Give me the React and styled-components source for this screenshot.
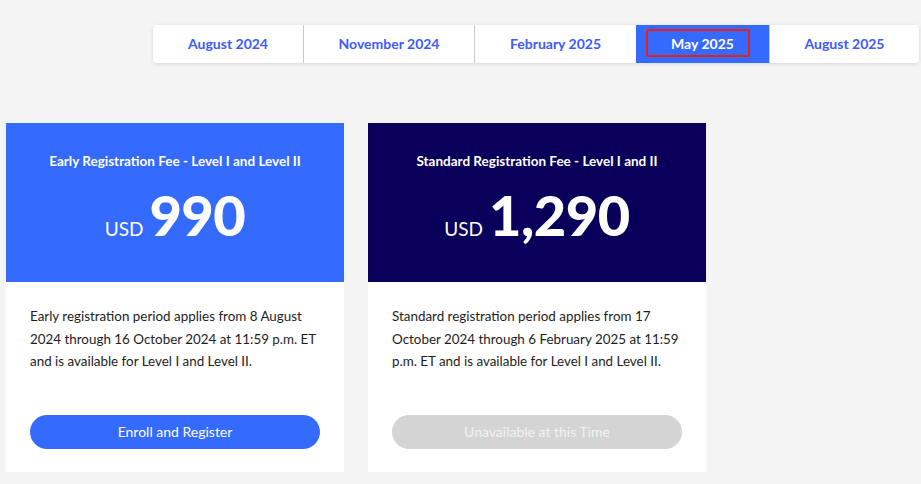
import React from "react";
import styled, { createGlobalStyle } from "styled-components";

const GlobalStyle = createGlobalStyle`
	body {
		margin: 0;
		background: #f4f4f4;
		font-family: Lato, "Open Sans", sans-serif;
	}
`;

const Page = styled.div`
	width: 921px;
	height: 484px;
	overflow: hidden;
	box-sizing: border-box;
	padding: 25px 2px 0 6px;
`;

const TabBar = styled.div`
	display: flex;
	justify-content: flex-end;
`;

const Tabs = styled.div`
	display: flex;
	height: 38px;
	background: #fff;
	border-radius: 4px;
	box-shadow: 0 1px 4px rgba(0, 0, 0, 0.12);
	overflow: hidden;
`;

const Tab = styled.button`
	width: ${(props) => props.width}px;
	border: 0;
	border-left: ${(props) => (props.first || props.active ? "0" : "1px solid #c8c8c8")};
	background: ${(props) => (props.active ? "#356aff" : "#fff")};
	color: ${(props) => (props.active ? "#fff" : "#3d5afe")};
	font-family: Lato, sans-serif;
	font-weight: 700;
	font-size: 14px;
	padding: 0 0 2px;
	display: flex;
	align-items: center;
	justify-content: center;
`;

const Focus = styled.span`
	display: inline-flex;
	align-items: center;
	justify-content: center;
	width: 90px;
	height: 24px;
	padding-left: 10px;
	margin-right: 10px;
	border: 2px solid #e8201c;
	border-radius: 2px;
`;

const Cards = styled.div`
	display: flex;
	gap: 24px;
	margin-top: 60px;
`;

const Card = styled.div`
	width: 338px;
	background: #fff;
	display: flex;
	flex-direction: column;
`;

const Header = styled.div`
	height: 159px;
	box-sizing: border-box;
	background: ${(props) => props.bg};
	color: #fff;
	padding-top: 30px;
	text-align: center;
`;

const Title = styled.div`
	font-size: 13.5px;
	font-weight: 700;
	line-height: 16px;
`;

const Price = styled.div`
	display: flex;
	justify-content: center;
	align-items: baseline;
	gap: 6px;
	margin-top: 18px;
	line-height: 1;
`;

const Currency = styled.span`
	font-size: 19px;
`;

const Amount = styled.span`
	font-size: 56px;
	font-weight: 900;
	letter-spacing: -0.5px;
`;

const Body = styled.div`
	height: 190px;
	box-sizing: border-box;
	padding: 23px 24px 23px;
	display: flex;
	flex-direction: column;
`;

const Text = styled.p`
	margin: 0;
	font-size: 13.4px;
	line-height: 22.5px;
	color: #1d1d1d;
`;

const Action = styled.button`
	margin-top: auto;
	height: 34px;
	border: 0;
	border-radius: 17px;
	padding: 0 0 1px;
	background: ${(props) => (props.disabled ? "#d4d4d4" : "#356aff")};
	color: ${(props) => (props.disabled ? "#f2f2f2" : "#fff")};
	font-family: Lato, sans-serif;
	font-size: 14px;
`;

const tabs = [
	{ label: "August 2024", width: 150 },
	{ label: "November 2024", width: 171 },
	{ label: "February 2025", width: 162 },
	{ label: "May 2025", width: 133, active: true },
	{ label: "August 2025", width: 150 },
];

const cards = [
	{
		bg: "#356aff",
		title: "Early Registration Fee - Level I and Level II",
		amount: "990",
		text: "Early registration period applies from 8 August 2024 through 16 October 2024 at 11:59 p.m. ET and is available for Level I and Level II.",
		button: "Enroll and Register",
	},
	{
		bg: "#08005a",
		title: "Standard Registration Fee - Level I and II",
		amount: "1,290",
		text: "Standard registration period applies from 17 October 2024 through 6 February 2025 at 11:59 p.m. ET and is available for Level I and Level II.",
		button: "Unavailable at this Time",
		disabled: true,
	},
];

export default function App() {
	return (
		<>
			<GlobalStyle />
			<Page>
				<TabBar>
					<Tabs>
						{tabs.map((t, i) => (
							<Tab key={t.label} width={t.width} active={t.active} first={i === 0}>
								{t.active ? <Focus>{t.label}</Focus> : t.label}
							</Tab>
						))}
					</Tabs>
				</TabBar>
				<Cards>
					{cards.map((c) => (
						<Card key={c.title}>
							<Header bg={c.bg}>
								<Title>{c.title}</Title>
								<Price>
									<Currency>USD</Currency>
									<Amount>{c.amount}</Amount>
								</Price>
							</Header>
							<Body>
								<Text>{c.text}</Text>
								<Action disabled={c.disabled}>{c.button}</Action>
							</Body>
						</Card>
					))}
				</Cards>
			</Page>
		</>
	);
}
